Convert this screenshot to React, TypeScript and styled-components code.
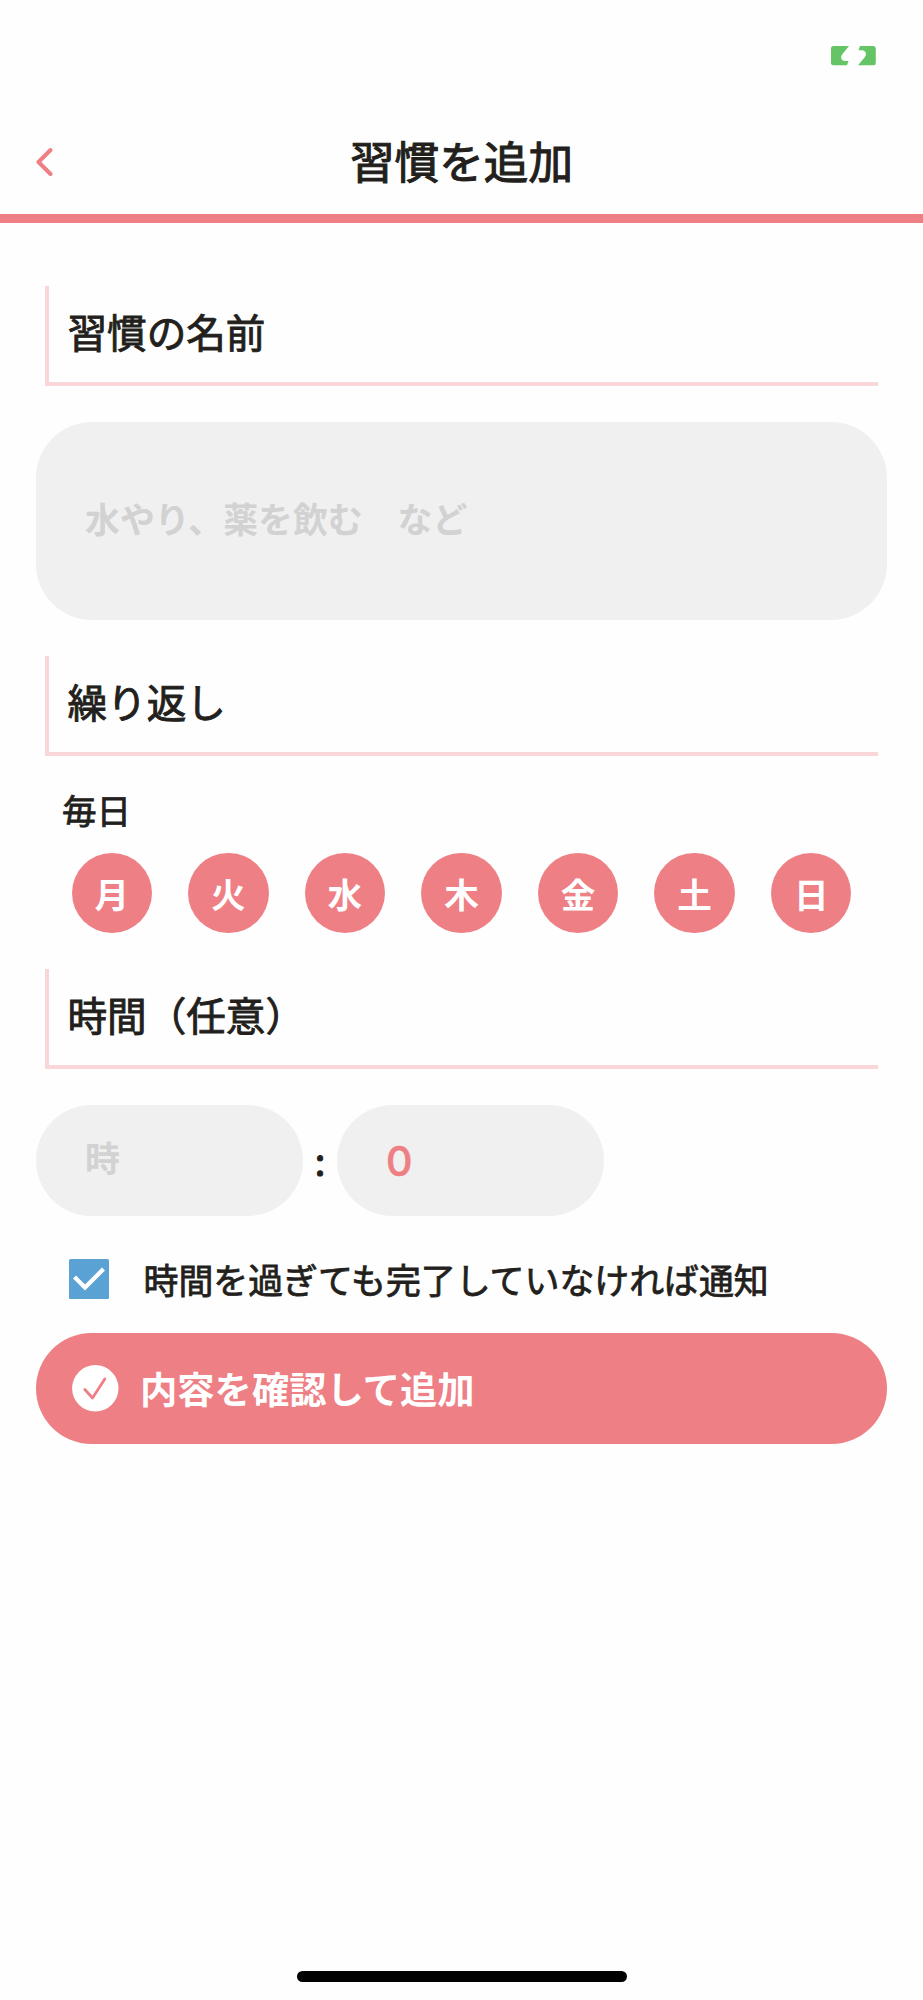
import React from "react";
import styled, { createGlobalStyle } from "styled-components";

const coral = "#ee7f84";
const ink = "#231f1c";

const GlobalStyle = createGlobalStyle`
  * { box-sizing: border-box; }
  body {
    margin: 0;
    background: #fefefe;
    color: ${ink};
    font-family: "Noto Sans CJK JP", sans-serif;
  }
`;

const Screen = styled.div`
  display: flex;
  flex-direction: column;
  width: 923px;
  height: 2000px;
  overflow: hidden;
`;

const StatusBar = styled.div`
  display: flex;
  justify-content: flex-end;
  height: 112px;
  padding: 46px 47px 0 0;
  flex: none;
`;

const Header = styled.header`
  display: grid;
  grid-template-columns: 1fr auto 1fr;
  align-items: center;
  height: 111px;
  padding: 0 36px;
  border-bottom: 9px solid ${coral};
  flex: none;
`;

const Back = styled.button`
  display: flex;
  width: 18px;
  padding: 0 0 2px;
  border: 0;
  background: none;
`;

const Title = styled.h1`
  margin: 0;
  padding-bottom: 7px;
  font-size: 44.6px;
  line-height: 60px;
  font-weight: 400;
  -webkit-text-stroke: 1.1px ${ink};
`;

const Form = styled.main`
  display: flex;
  flex-direction: column;
  padding: 63px 36px 0;
`;

const SectionHeading = styled.h2<{ $gap: number }>`
  display: flex;
  align-items: center;
  height: 100px;
  margin: 0 9px ${(p) => p.$gap}px;
  padding: 0 0 6px 18.5px;
  border-left: 4px solid #f9d6d8;
  border-bottom: 4px solid #f9d6d8;
  font-size: 39.6px;
  line-height: 60px;
  font-weight: 400;
  -webkit-text-stroke: 0.9px ${ink};
`;

const Field = styled.input<{ $width: number; $height: number }>`
  display: block;
  width: ${(p) => p.$width}px;
  height: ${(p) => p.$height}px;
  padding: 0 49px 6px;
  border: 0;
  border-radius: 56px;
  outline: 0;
  background: #f0f0f0;
  color: ${coral};
  font: 400 34.9px "Noto Sans CJK JP", sans-serif;
  &::placeholder { color: #d2d2d2; opacity: 1; font-weight: 700; }
`;

const NameField = styled(Field)`
  margin-bottom: 36px;
`;

const NumberField = styled(Field)`
  padding: 2px 49px 0;
  font: 500 41px Inter, sans-serif;
  -webkit-text-stroke: 0.6px ${coral};
`;

const Frequency = styled.div`
  margin: -2px 0 0 26px;
  font-size: 34.6px;
  line-height: 50px;
  -webkit-text-stroke: 0.8px ${ink};
`;

const Days = styled.div`
  display: flex;
  justify-content: space-between;
  margin: 18.5px 35.5px 35.5px;
`;

const Day = styled.button`
  display: flex;
  align-items: center;
  justify-content: center;
  width: 80.5px;
  height: 80.5px;
  padding: 0;
  border: 0;
  border-radius: 50%;
  background: ${coral};
  color: #fff;
  font: 700 34.6px "Noto Sans CJK JP", sans-serif;
`;

const TimeRow = styled.div`
  display: flex;
  align-items: center;
`;

const Colon = styled.span`
  width: 34px;
  padding-bottom: 1px;
  text-align: center;
  font-size: 38px;
  line-height: 60px;
  -webkit-text-stroke: 1.2px ${ink};
`;

const Notify = styled.label`
  display: flex;
  align-items: center;
  height: 40px;
  margin: 43.5px 33px 33.5px;
  gap: 34.5px;
  font-size: 34.9px;
  line-height: 50px;
  white-space: nowrap;
  -webkit-text-stroke: 0.8px ${ink};
`;

const Submit = styled.button`
  display: flex;
  align-items: center;
  gap: 21px;
  height: 111.5px;
  padding: 0 36px;
  border: 0;
  border-radius: 56px;
  background: ${coral};
  color: #fff;
  font: 700 37.3px "Noto Sans CJK JP", sans-serif;
`;

const HomeIndicator = styled.div`
  width: 330px;
  height: 11px;
  margin: auto auto 18px;
  border-radius: 6px;
  background: #000;
  flex: none;
`;

const BatteryIcon = () => (
  <svg width="45" height="20" viewBox="0 0 45 20" fill="#65c466">
    <path d="M2.5 0H18L11.5 8C8.5 12 11 15 14 15H17.5L16 19.2H2.5Q0 19.2 0 16.7V2.5Q0 0 2.5 0Z" />
    <path d="M29 0H42.5Q44.8 0 44.8 2.5V16.7Q44.8 19.2 42.5 19.2H27L33.5 11.5C36.5 8 34.5 4.2 31 4.2H27.5Z" />
  </svg>
);

const BackIcon = () => (
  <svg width="18" height="30" viewBox="0 0 18 30" fill="none">
    <path d="M14.5 3L2.5 15L14.5 27" stroke={coral} strokeWidth="4" strokeLinecap="round" strokeLinejoin="round" />
  </svg>
);

const CheckboxIcon = () => (
  <svg width="40" height="40" viewBox="0 0 40 40" fill="none">
    <rect width="40" height="40" rx="1.5" fill="#5ba2d4" />
    <path d="M5.5 18L16 28.5L34.5 10" stroke="#fff" strokeWidth="4.2" />
  </svg>
);

const ConfirmIcon = () => (
  <svg width="47" height="47" viewBox="0 0 47 47" fill="none">
    <circle cx="23.3" cy="23.3" r="23.2" fill="#fff" />
    <path d="M12.8 24.5L20.5 33L32.8 14" stroke={coral} strokeWidth="2.8" strokeLinecap="round" strokeLinejoin="round" />
  </svg>
);

const days = ["月", "火", "水", "木", "金", "土", "日"];

export default function App() {
  return (
    <Screen>
      <GlobalStyle />
      <StatusBar>
        <BatteryIcon />
      </StatusBar>
      <Header>
        <Back>
          <BackIcon />
        </Back>
        <Title>習慣を追加</Title>
      </Header>
      <Form>
        <SectionHeading $gap={36}>習慣の名前</SectionHeading>
        <NameField $width={851} $height={198} placeholder="水やり、薬を飲む　など" />
        <SectionHeading $gap={30}>繰り返し</SectionHeading>
        <Frequency>毎日</Frequency>
        <Days>
          {days.map((d) => (
            <Day key={d}>{d}</Day>
          ))}
        </Days>
        <SectionHeading $gap={36}>時間（任意）</SectionHeading>
        <TimeRow>
          <Field $width={267} $height={111} placeholder="時" />
          <Colon>:</Colon>
          <NumberField $width={267} $height={111} defaultValue="0" />
        </TimeRow>
        <Notify>
          <CheckboxIcon />
          時間を過ぎても完了していなければ通知
        </Notify>
        <Submit>
          <ConfirmIcon />
          内容を確認して追加
        </Submit>
      </Form>
      <HomeIndicator />
    </Screen>
  );
}
